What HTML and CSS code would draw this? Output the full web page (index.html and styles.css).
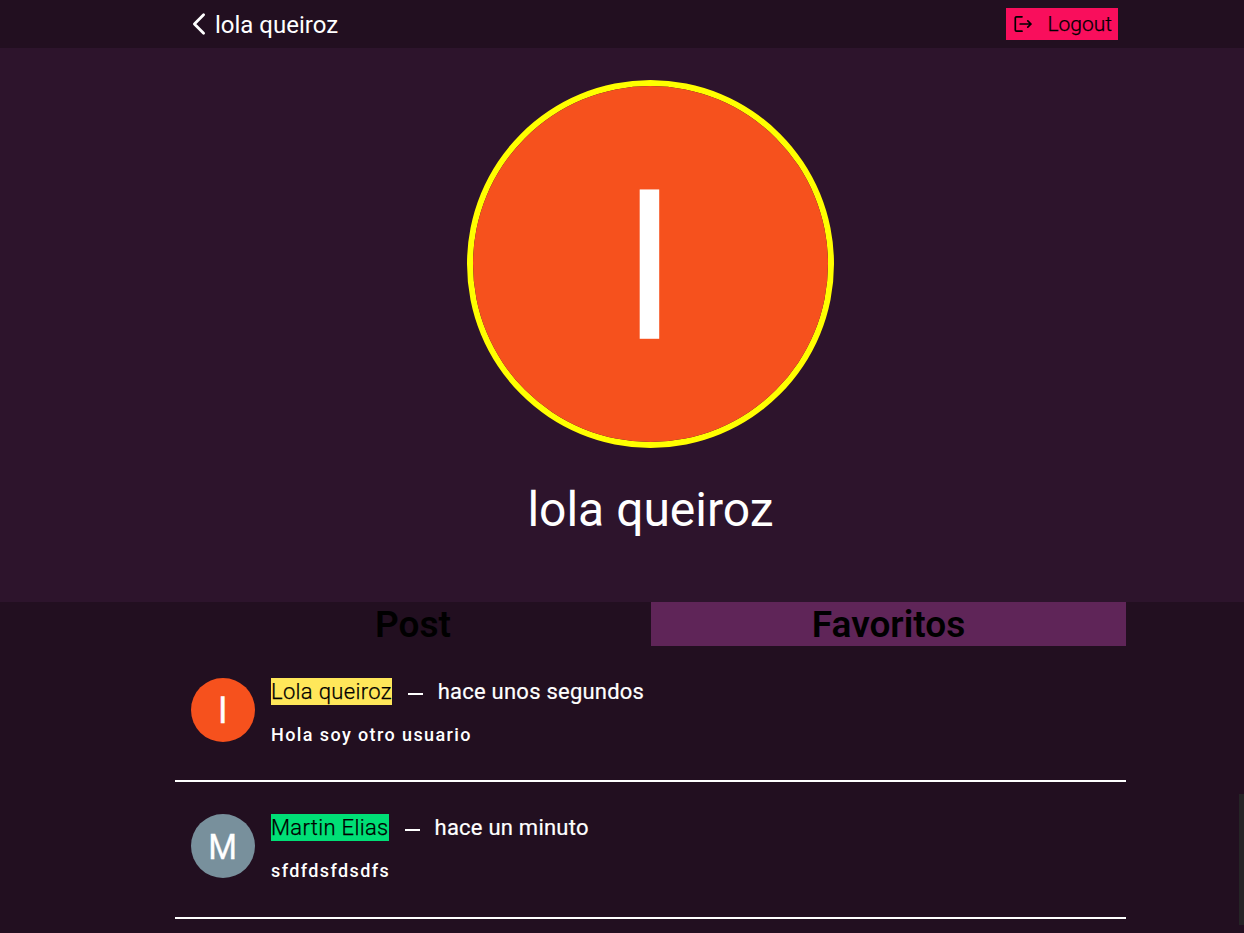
FILE: index.html
```html
<!DOCTYPE html>
<html lang="es">
<head>
<meta charset="utf-8">
<title>lola queiroz</title>
<link rel="stylesheet" href="styles.css">
</head>
<body>
<header class="topbar">
  <div class="wrap topbar-inner">
    <a class="back">
      <svg class="chevron" width="16" height="24" viewBox="0 0 16 24"><path d="M12.600 2.800 3.400 12l9.200 9.200" fill="none" stroke="currentColor" stroke-width="2.8" stroke-linecap="round" stroke-linejoin="round"/></svg>
      <span>lola queiroz</span>
    </a>
    <button class="logout">
      <svg width="20" height="20" viewBox="0 0 20 20" fill="none" stroke="currentColor" stroke-width="1.7" stroke-linecap="round" stroke-linejoin="round"><path d="M9 2.8H3.6Q2.3 2.8 2.3 4.1V15.9Q2.3 17.2 3.6 17.2H9M7.2 10H18M14.8 6.8 18 10l-3.200 3.200"/></svg>
      <span>Logout</span>
    </button>
  </div>
</header>
<section class="profile">
  <div class="wrap profile-inner">
    <svg class="portrait" viewBox="0 0 356 356" preserveAspectRatio="none"><rect width="356" height="356" fill="#f6511d"/><text x="177" y="252.500" text-anchor="middle" font-size="197.500" stroke-width="1.500">l</text></svg>
    <h1 class="name">lola queiroz</h1>
  </div>
</section>
<main class="wrap">
  <nav class="tabs">
    <div class="tab">Post</div>
    <div class="tab tab-alt">Favoritos</div>
  </nav>
  <article class="post">
    <svg class="avatar" viewBox="0 0 64 64"><rect width="64" height="64" fill="#f6511d"/><text x="31.700" y="45" text-anchor="middle" font-size="35" stroke-width=".5">l</text></svg>
    <div class="content">
      <div class="meta"><span class="author yellow">Lola queiroz</span><i class="dash"></i><span class="time">hace unos segundos</span></div>
      <p class="text">Hola soy otro usuario</p>
    </div>
  </article>
  <article class="post">
    <svg class="avatar" viewBox="0 0 64 64"><rect width="64" height="64" fill="#78909c"/><text transform="translate(31.700 45) scale(.94 1)" text-anchor="middle" font-size="35" stroke-width=".3">M</text></svg>
    <div class="content">
      <div class="meta"><span class="author green">Martin Elias</span><i class="dash"></i><span class="time">hace un minuto</span></div>
      <p class="text">sfdfdsfdsdfs</p>
    </div>
  </article>
</main>
<div class="scroll-thumb"></div>
</body>
</html>
```
FILE: styles.css
```css
* { box-sizing: border-box; }
body {
  margin: 0;
  height: 933px;
  overflow: hidden;
  background: #220f20;
  color: #fff;
  font-family: Roboto, sans-serif;
}
.wrap { width: 951px; margin-left: 175px; }
.topbar { height: 48px; }
.topbar-inner {
  height: 100%;
  padding: 0 8px 0 16px;
  display: flex;
  align-items: center;
  justify-content: space-between;
}
.back { display: flex; align-items: center; gap: 8px; font-size: 24px; line-height: 28px; }
.back span { padding-top: 2px; }
.logout {
  width: 112px;
  height: 32px;
  padding: 0 6px 0 7px;
  border: 0;
  display: flex;
  align-items: center;
  justify-content: space-between;
  background: #f90e5c;
  color: #000;
  font: 300 21px/24px Roboto, sans-serif;
}
.logout span { -webkit-text-stroke: .25px #000; }
.profile { height: 554px; background: #2d142c; }
.profile-inner {
  padding-top: 32px;
  display: flex;
  flex-direction: column;
  align-items: center;
}
.portrait {
  width: 367px;
  height: 368px;
  border: 6px solid #ff0;
  border-radius: 50%;
}
svg text { fill: #fff; stroke: #fff; font-family: Roboto, sans-serif; }
.name { margin: 34px 0 0; font-size: 48px; line-height: 56px; font-weight: 400; }
.tabs { display: grid; grid-template-columns: 476px 475px; }
.tab {
  height: 44px;
  padding-top: 1px;
  text-align: center;
  color: #000;
  font-size: 37px;
  line-height: 44px;
  font-weight: 600;
}
.tab-alt { background: #5f2558; }
.post {
  display: flex;
  gap: 16px;
  height: 136px;
  padding: 32px 16px 0;
  border-bottom: 2px solid #fff;
}
.post + .post { height: 137px; }
.avatar { width: 64px; height: 64px; border-radius: 50%; flex: none; }
.meta { display: flex; align-items: center; font-size: 22px; line-height: 27px; }
.author { color: #000; font-weight: 300; letter-spacing: .33px; -webkit-text-stroke: .25px #000; }
.time { letter-spacing: .23px; -webkit-text-stroke: .2px #fff; }
.yellow { background: #ffe75a; }
.green { background: #00df76; }
.dash { width: 15px; height: 2px; margin: 5px 15px 0 16px; background: #fff; }
.text {
  margin: 19px 0 0;
  font-size: 18px;
  line-height: 21px;
  font-weight: 500;
  letter-spacing: 1.400px;
}
.scroll-thumb { position: absolute; left: 1239px; top: 794px; width: 5px; height: 131px; background: #252426; }
```
